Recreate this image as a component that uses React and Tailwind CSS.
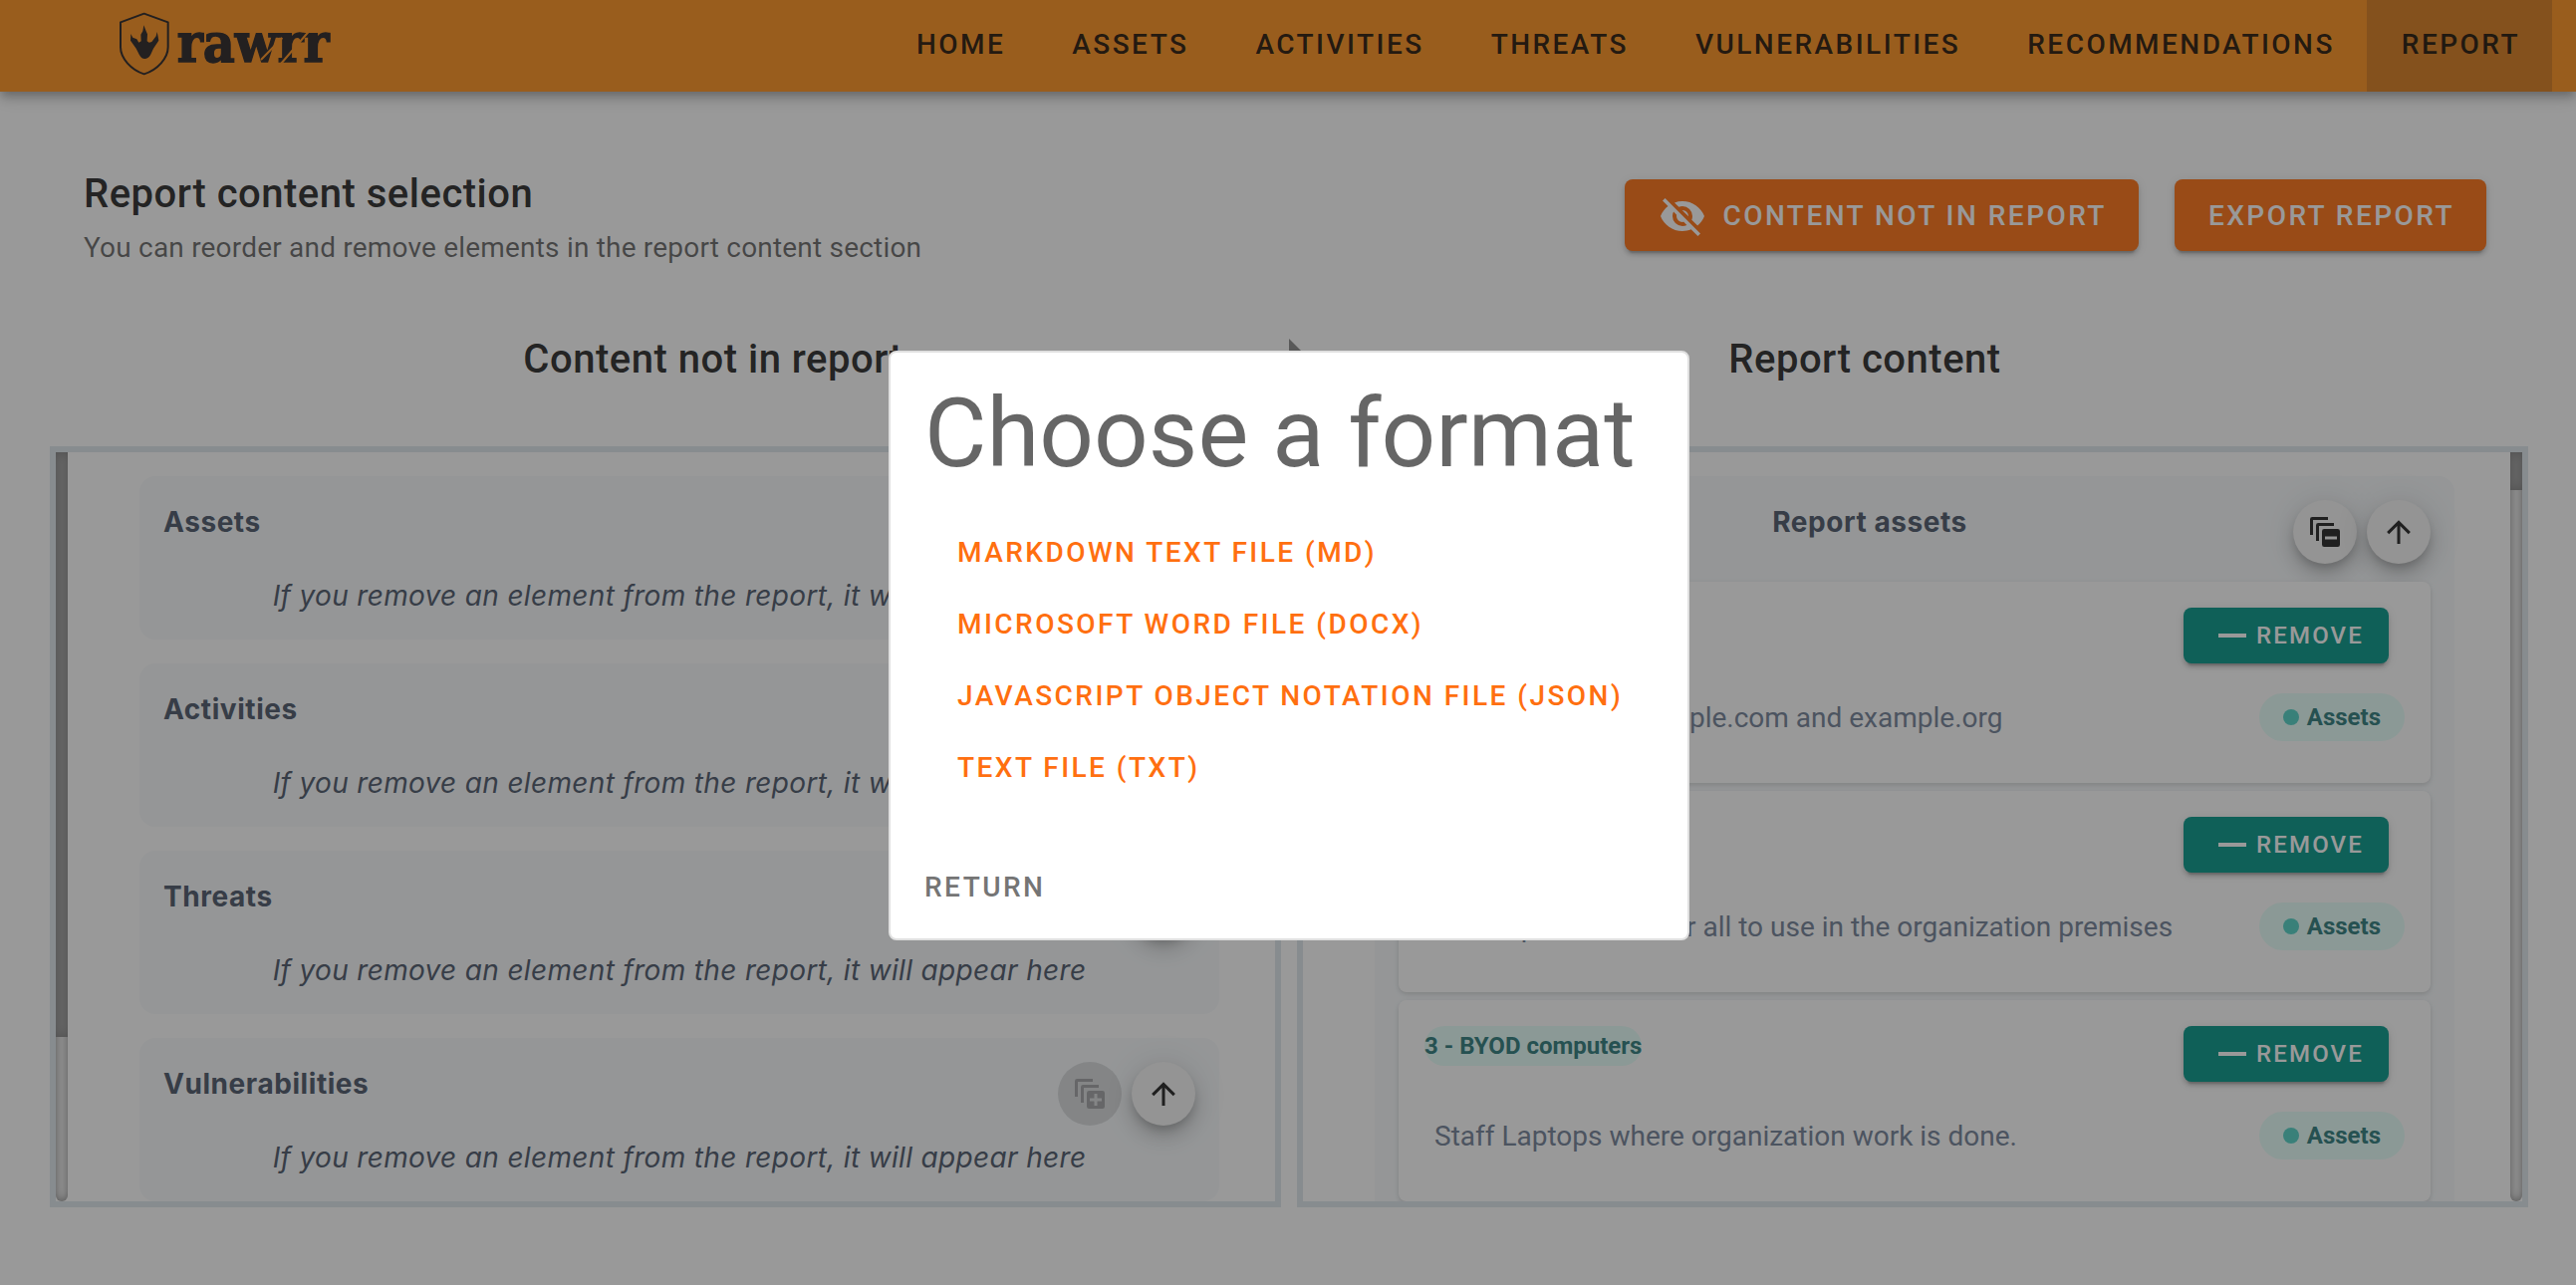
import React from "react";

const NAV = [
  "Home",
  "Assets",
  "Activities",
  "Threats",
  "Vulnerabilities",
  "Recommendations",
  "Report",
];

const REMOVED_SECTIONS = ["Assets", "Activities", "Threats", "Vulnerabilities"];

const REPORT_ASSETS = [
  { title: "1 - Web domains", text: "Mail service at example.com and example.org" },
  { title: "2 - Desktops", text: "Desktops allowed for all to use in the organization premises" },
  { title: "3 - BYOD computers", text: "Staff Laptops where organization work is done." },
];

const FORMATS = [
  "Markdown text file (md)",
  "Microsoft Word file (docx)",
  "JavaScript Object Notation file (json)",
  "Text file (txt)",
];

function Logo() {
  return (
    <svg viewBox="114 30 651 201" className="mb-[6px] h-[67px] w-[217px]" role="img" aria-label="rawrr">
      <path
        d="M194 41 L266 67 V142 C266 175 235 210 194 223 C154 210 123 175 123 142 V67 Z"
        fill="none"
        stroke="#262021"
        strokeWidth="6"
        strokeLinejoin="round"
      />
      <path
        d="M193 76 L200 94 L204 103 L203 124 L209 128 L217 126 L230 109 L233 96 L236 110 L238 122 L222 146 L213 166 C208 174 203 177 196 177 C188 177 184 173 180 166 L170 146 L153 122 L154 102 L160 113 L172 118 L178 128 L185 124 L184 104 L190 94 Z"
        fill="#262021"
      />
      <text
        x="293"
        y="187"
        fontFamily="'DejaVu Serif Condensed', 'DejaVu Serif', serif"
        fontStretch="condensed"
        fontWeight="700"
        fontSize="165"
        fill="#262021"
        stroke="#262021"
        strokeWidth="4"
      >
        rawrr
      </text>
      <path d="M546 180 L610 114 M606 192 L694 90" stroke="#ff901b" strokeWidth="6" fill="none" />
    </svg>
  );
}

function EyeOffIcon() {
  return (
    <svg viewBox="0 0 24 24" className="size-12" fill="currentColor" aria-hidden="true">
      <path d="M11.83,9L15,12.16C15,12.11 15,12.05 15,12A3,3 0 0,0 12,9C11.94,9 11.89,9 11.83,9M7.53,9.8L9.08,11.35C9.03,11.56 9,11.77 9,12A3,3 0 0,0 12,15C12.22,15 12.44,14.97 12.65,14.92L14.2,16.47C13.53,16.8 12.79,17 12,17A5,5 0 0,1 7,12C7,11.21 7.2,10.47 7.53,9.8M2,4.27L4.28,6.55L4.73,7C3.08,8.3 1.78,10 1,12C2.73,16.39 7,19.5 12,19.5C13.55,19.5 15.03,19.2 16.38,18.66L16.81,19.08L19.73,22L21,20.73L3.27,3M12,7A5,5 0 0,1 17,12C17,12.64 16.87,13.26 16.64,13.82L19.57,16.75C21.07,15.5 22.27,13.86 23,12C21.27,7.61 17,4.5 12,4.5C10.6,4.5 9.26,4.75 8,5.2L10.17,7.35C10.74,7.13 11.35,7 12,7Z" />
    </svg>
  );
}

function ArrowUpIcon() {
  return (
    <svg viewBox="0 0 24 24" className="size-9" fill="currentColor" aria-hidden="true">
      <path d="M13,20H11V8L5.5,13.5L4.08,12.08L12,4.16L19.92,12.08L18.5,13.5L13,8V20Z" />
    </svg>
  );
}

function StackIcon({ plus }) {
  return (
    <svg viewBox="0 0 24 24" className="size-9" fill="currentColor" aria-hidden="true">
      <path d="M4 14H2V3.500A1.500 1.500 0 0 1 3.500 2H14V4H4Z" />
      <path d="M8 18H6V7.500A1.500 1.500 0 0 1 7.500 6H18V8H8Z" />
      {plus ? (
        <path
          fillRule="evenodd"
          d="M11.500 10H20.500A1.500 1.500 0 0 1 22 11.500V20.500A1.500 1.500 0 0 1 20.500 22H11.500A1.500 1.500 0 0 1 10 20.500V11.500A1.500 1.500 0 0 1 11.500 10ZM15 12V15H12V17H15V20H17V17H20V15H17V12Z"
        />
      ) : (
        <path
          fillRule="evenodd"
          d="M11.500 10H20.500A1.500 1.500 0 0 1 22 11.500V20.500A1.500 1.500 0 0 1 20.500 22H11.500A1.500 1.500 0 0 1 10 20.500V11.500A1.500 1.500 0 0 1 11.500 10ZM12 15V17H20V15Z"
        />
      )}
    </svg>
  );
}

function Fab({ label, disabled, children }) {
  return (
    <button
      type="button"
      aria-label={label}
      disabled={disabled}
      className="flex size-16 items-center justify-center rounded-full bg-[#f5f5f5] text-black/87 shadow-[0_6px_10px_-2px_rgba(0,0,0,0.2),0_12px_20px_rgba(0,0,0,0.14),0_2px_36px_rgba(0,0,0,0.12)] disabled:bg-black/12 disabled:text-black/26 disabled:shadow-none"
    >
      {children}
    </button>
  );
}

function Scrollbar({ thumb }) {
  return (
    <div className="w-3 shrink-0 rounded-b-lg bg-[#f5f5f5] shadow-[inset_0_0_10px_#808080]">
      <div className={`bg-[#a8a8a8] shadow-[inset_0_0_12px_rgba(0,0,0,0.3)] ${thumb}`} />
    </div>
  );
}

function RemovedSection({ name }) {
  return (
    <section className="rounded-2xl bg-[#f7fafc] px-6 pt-6 pb-[22px]">
      <div className="flex items-start justify-between">
        <h3 className="font-['Inter',sans-serif] text-[28px] leading-[44px] font-bold tracking-[0.02em] text-[#4a5568]">
          {name}
        </h3>
        <div className="flex gap-[10px]">
          <Fab label={`Add all ${name}`} disabled>
            <StackIcon plus />
          </Fab>
          <Fab label={`Collapse ${name}`}>
            <ArrowUpIcon />
          </Fab>
        </div>
      </div>
      <p className="mt-[10px] text-center font-['Inter',sans-serif] text-[28px] leading-[44px] tracking-[0.012em] text-[#4a5568] italic">
        If you remove an element from the report, it will appear here
      </p>
    </section>
  );
}

function AssetCard({ title, text }) {
  return (
    <article className="rounded-lg bg-white px-[26px] pt-[26px] pb-[42px] shadow-[0_2px_6px_rgba(0,0,0,0.1),0_2px_4px_rgba(0,0,0,0.06)]">
      <div className="flex items-start justify-between pr-4">
        <h4 className="rounded-full bg-[#e6fffa] text-[24px] leading-[40px] font-bold text-[#2c7a7b]">
          {title}
        </h4>
        <button
          type="button"
          className="flex h-14 items-center rounded-lg bg-[#009688] pr-[25px] pl-[35px] text-[24px] font-medium tracking-[0.09em] text-white uppercase shadow-[0_6px_2px_-4px_rgba(0,0,0,0.2),0_4px_4px_rgba(0,0,0,0.14),0_2px_10px_rgba(0,0,0,0.12)]"
        >
          <span className="mr-[10px] h-1 w-7 bg-white" />
          Remove
        </button>
      </div>
      <div className="mt-[30px] flex h-12 items-center justify-between pl-[10px]">
        <p className="pt-[2px] text-[28px] leading-[44px] whitespace-nowrap text-[#718096]">{text}</p>
        <span className="flex h-12 items-center gap-2 rounded-full bg-[#e6fffa] px-6 text-[24px] font-bold text-[#2c7a7b]">
          <span className="size-4 rounded-full bg-[#4fd1c5]" />
          Assets
        </span>
      </div>
    </article>
  );
}

function ActionButton({ children }) {
  return (
    <button
      type="button"
      className="flex h-[72px] items-center gap-4 rounded-lg bg-[#ff6f10] pt-[2px] pr-8 pl-[34px] text-[28px] font-medium tracking-[0.088em] whitespace-nowrap text-white uppercase shadow-[0_6px_2px_-4px_rgba(0,0,0,0.2),0_4px_4px_rgba(0,0,0,0.14),0_2px_10px_rgba(0,0,0,0.12)]"
    >
      {children}
    </button>
  );
}

function FormatDialog() {
  return (
    <div className="fixed inset-0 flex items-center justify-center bg-[#212121]/46 pt-[6px] pl-[2px]">
      <div className="relative">
        <svg viewBox="0 0 16 16" className="absolute -top-3 left-1/2 size-4" aria-hidden="true">
          <path d="M0 0L16 16H0Z" fill="#595959" />
        </svg>
        <div
          role="dialog"
          aria-modal="true"
          aria-labelledby="format-title"
          className="relative w-[804px] max-w-full rounded-lg border-2 border-[#e0e0e0] bg-white px-[34px] pt-[33px] pb-[15px]"
        >
          <h2 id="format-title" className="text-[96px] leading-[96px] whitespace-nowrap text-black/60">
            Choose a format
          </h2>
          <ul className="mt-[36px]">
            {FORMATS.map((format) => (
              <li key={format}>
                <button
                  type="button"
                  className="h-[72px] pl-[33px] text-[28px] font-medium tracking-[0.088em] whitespace-nowrap text-[#ff6f10] uppercase"
                >
                  {format}
                </button>
              </li>
            ))}
          </ul>
          <button
            type="button"
            className="mt-12 h-[72px] text-[28px] font-medium tracking-[0.088em] text-[#757575] uppercase"
          >
            Return
          </button>
        </div>
      </div>
    </div>
  );
}

export default function App() {
  return (
    <div className="min-h-screen bg-white font-['Roboto',sans-serif] text-black/87">
      <header className="relative flex h-[92px] items-center justify-between bg-[#ff901b] pr-6 pl-[118px] shadow-[0_4px_8px_-2px_rgba(0,0,0,0.2),0_8px_10px_rgba(0,0,0,0.14),0_2px_20px_rgba(0,0,0,0.12)]">
        <Logo />
        <nav className="flex h-full">
          {NAV.map((item) => (
            <a
              key={item}
              href={`#${item.toLowerCase()}`}
              aria-current={item === "Report" ? "page" : undefined}
              className="flex items-center pr-8 pb-[2px] pl-[35px] text-[28px] font-medium tracking-[0.088em] uppercase aria-[current=page]:bg-[#d87a1b]"
            >
              {item}
            </a>
          ))}
        </nav>
      </header>

      <main className="pt-[71px] pr-12 pl-[50px]">
        <div className="flex items-start justify-between pr-[42px] pl-[34px]">
          <div>
            <h1 className="text-[40px] leading-[64px] font-medium tracking-[0.0125em]">
              Report content selection
            </h1>
            <p className="text-[28px] leading-[44px] tracking-[0.007em] text-black/60">
              You can reorder and remove elements in the report content section
            </p>
          </div>
          <div className="mt-[17px] flex gap-9">
            <ActionButton>
              <EyeOffIcon />
              Content not in report
            </ActionButton>
            <ActionButton>Export report</ActionButton>
          </div>
        </div>

        <div className="mt-[58px] grid grid-cols-2 px-[88px] text-center text-[40px] leading-[64px] font-medium tracking-[0.0125em]">
          <h2>Content not in report</h2>
          <h2>Report content</h2>
        </div>

        <div className="mt-[55px] grid grid-cols-2 gap-4">
          <div className="flex overflow-hidden border-6 border-[#dee7ec]">
            <Scrollbar thumb="h-[78%]" />
            <div className="flex flex-1 flex-col gap-6 pt-6 pr-14 pl-[72px]">
              {REMOVED_SECTIONS.map((name) => (
                <RemovedSection key={name} name={name} />
              ))}
            </div>
          </div>

          <div className="flex overflow-hidden border-6 border-[#dee7ec]">
            <div className="flex-1 pt-6 pr-14 pl-[72px]">
              <section className="rounded-t-2xl bg-[#f7fafc] px-6 pt-6">
                <div className="flex items-start">
                  <h3 className="flex-1 pl-12 text-center font-['Inter',sans-serif] text-[28px] leading-[44px] font-bold tracking-[0.02em] text-[#4a5568]">
                    Report assets
                  </h3>
                  <div className="flex gap-[10px]">
                    <Fab label="Remove all assets">
                      <StackIcon />
                    </Fab>
                    <Fab label="Collapse report assets">
                      <ArrowUpIcon />
                    </Fab>
                  </div>
                </div>
                <div className="mt-[18px] flex flex-col gap-2">
                  {REPORT_ASSETS.map((asset) => (
                    <AssetCard key={asset.title} title={asset.title} text={asset.text} />
                  ))}
                </div>
              </section>
            </div>
            <Scrollbar thumb="h-[5%]" />
          </div>
        </div>
      </main>

      <FormatDialog />
    </div>
  );
}
